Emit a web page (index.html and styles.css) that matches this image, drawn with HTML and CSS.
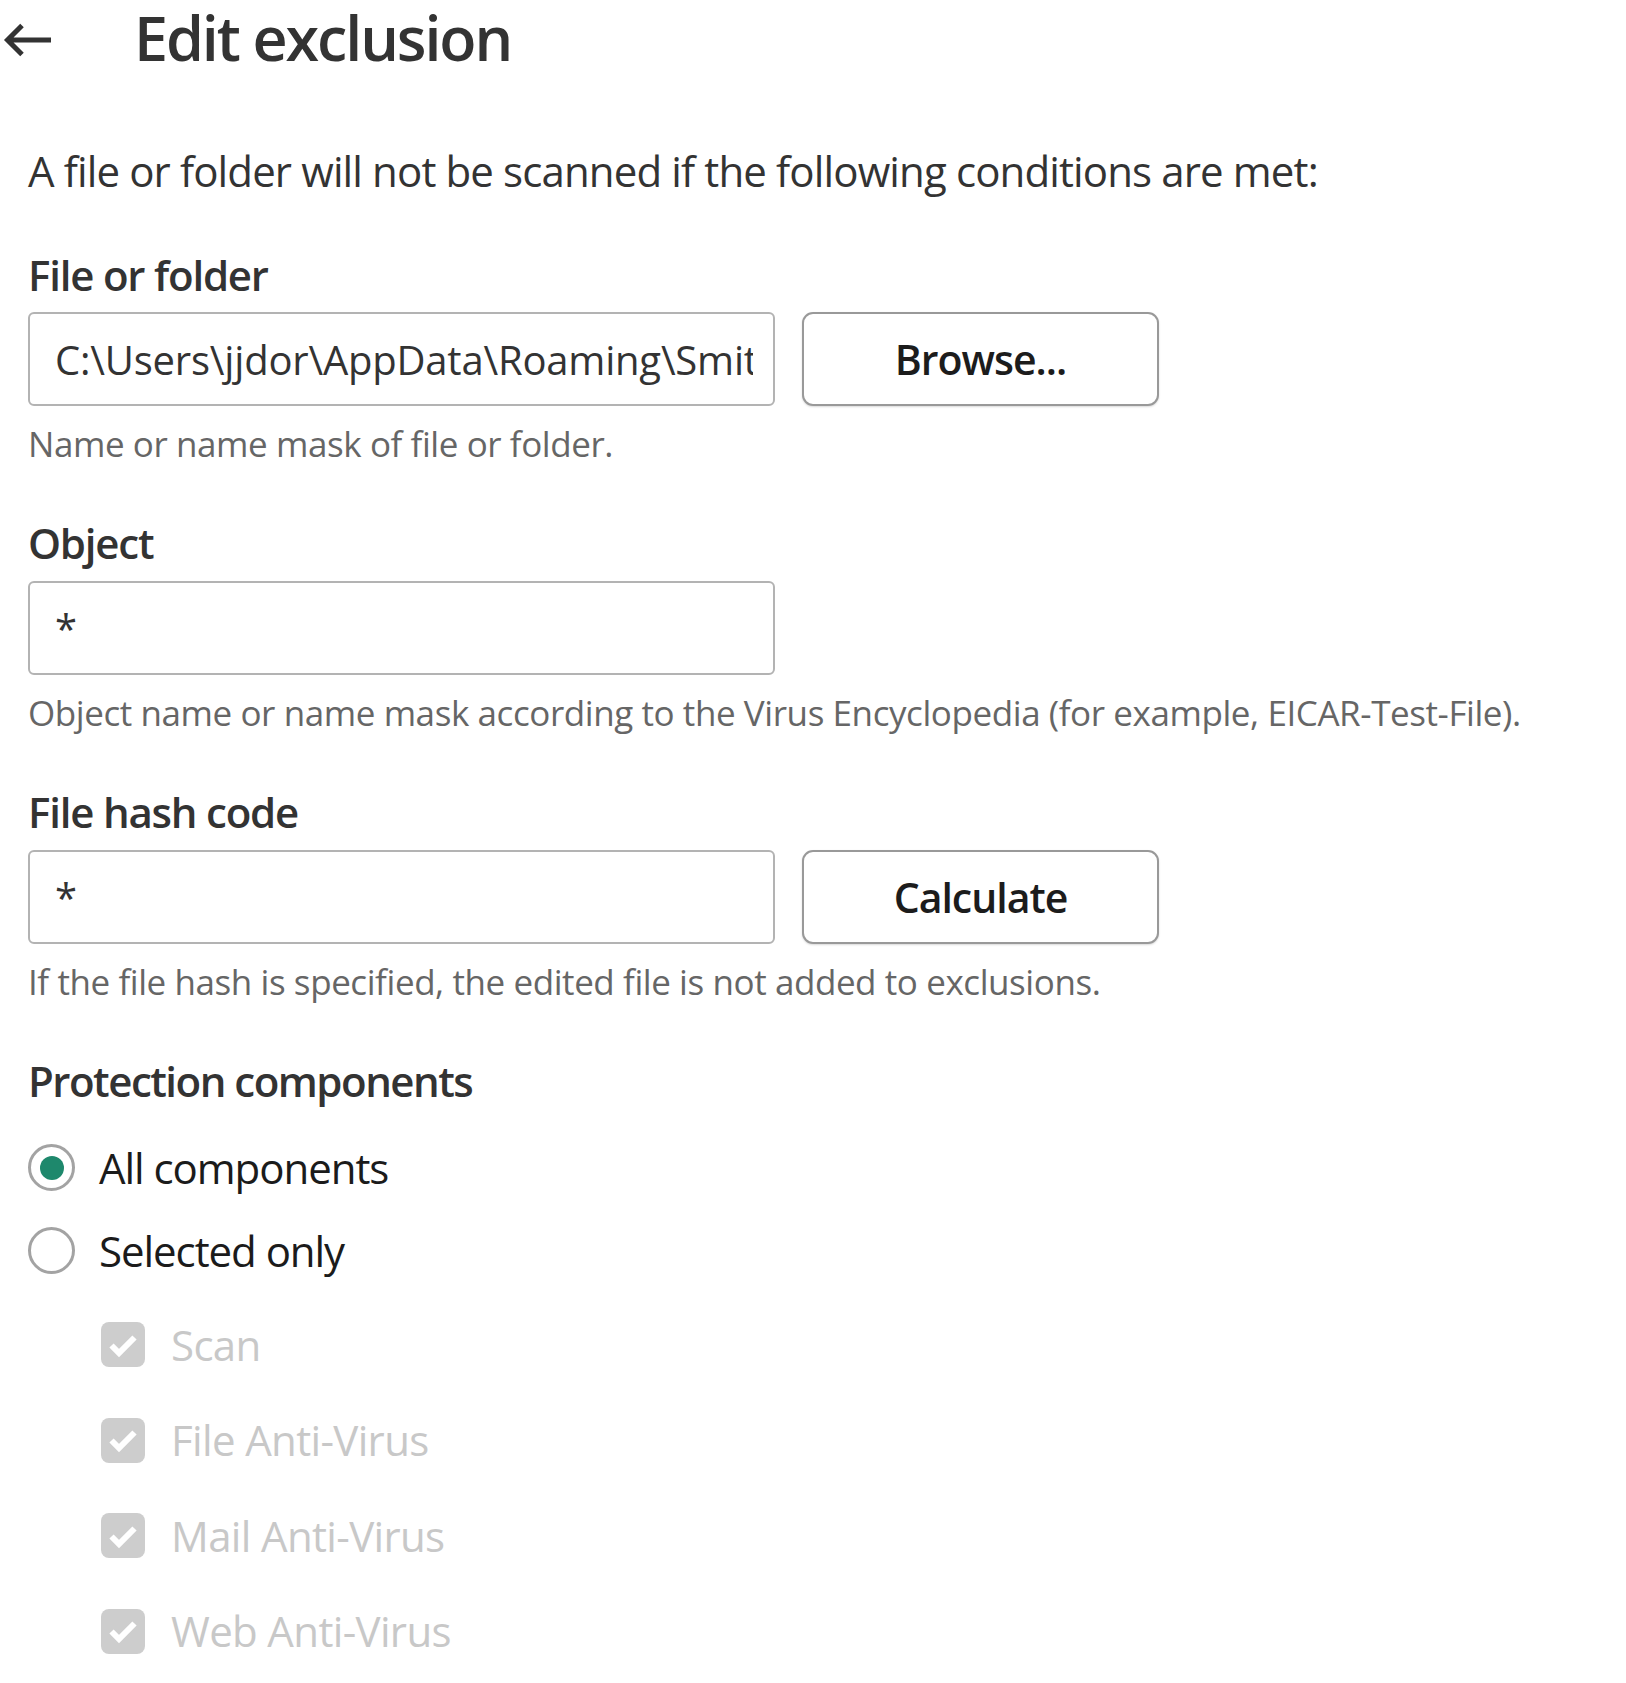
FILE: index.html
```html
<!DOCTYPE html>
<html lang="en">
<head>
<meta charset="utf-8">
<title>Edit exclusion</title>
<link rel="stylesheet" href="styles.css">
</head>
<body>
<div class="page">
  <header class="header">
    <button class="back" type="button" aria-label="Back">
      <svg width="50" height="36" viewBox="0 0 50 36" aria-hidden="true">
        <path d="M49 18 H6 M20 3.5 L5.5 18 L20 32.5" fill="none" stroke="#333333" stroke-width="5" stroke-linecap="butt" stroke-linejoin="miter"/>
      </svg>
    </button>
    <h1 class="title">Edit exclusion</h1>
  </header>

  <main class="content">
    <p class="desc">A file or folder will not be scanned if the following conditions are met:</p>

    <section class="field">
      <h2 class="label">File or folder</h2>
      <div class="input-row">
        <input class="text-input" type="text" value="C:\Users\jjdor\AppData\Roaming\SmitFiddler\Data">
        <button class="btn" type="button">Browse...</button>
      </div>
      <p class="hint">Name or name mask of file or folder.</p>
    </section>

    <section class="field">
      <h2 class="label">Object</h2>
      <div class="input-row">
        <input class="text-input" type="text" value="*">
      </div>
      <p class="hint">Object name or name mask according to the Virus Encyclopedia (for example, EICAR-Test-File).</p>
    </section>

    <section class="field">
      <h2 class="label">File hash code</h2>
      <div class="input-row">
        <input class="text-input" type="text" value="*">
        <button class="btn" type="button">Calculate</button>
      </div>
      <p class="hint">If the file hash is specified, the edited file is not added to exclusions.</p>
    </section>

    <section class="field">
      <h2 class="label label-group">Protection components</h2>
      <div class="radios">
        <label class="radio-row">
          <span class="radio radio-on"><span class="radio-dot"></span></span>
          <span class="radio-text">All components</span>
        </label>
        <label class="radio-row">
          <span class="radio"></span>
          <span class="radio-text">Selected only</span>
        </label>
      </div>
      <div class="checks">
        <div class="check-row">
          <span class="checkbox"><svg width="44" height="44" viewBox="0 0 44 44" aria-hidden="true"><path d="M10.5 22.5 L18 30 L33.5 14.5" fill="none" stroke="#ffffff" stroke-width="6"/></svg></span>
          <span class="check-text">Scan</span>
        </div>
        <div class="check-row">
          <span class="checkbox"><svg width="44" height="44" viewBox="0 0 44 44" aria-hidden="true"><path d="M10.5 22.5 L18 30 L33.5 14.5" fill="none" stroke="#ffffff" stroke-width="6"/></svg></span>
          <span class="check-text">File Anti-Virus</span>
        </div>
        <div class="check-row">
          <span class="checkbox"><svg width="44" height="44" viewBox="0 0 44 44" aria-hidden="true"><path d="M10.5 22.5 L18 30 L33.5 14.5" fill="none" stroke="#ffffff" stroke-width="6"/></svg></span>
          <span class="check-text">Mail Anti-Virus</span>
        </div>
        <div class="check-row">
          <span class="checkbox"><svg width="44" height="44" viewBox="0 0 44 44" aria-hidden="true"><path d="M10.5 22.5 L18 30 L33.5 14.5" fill="none" stroke="#ffffff" stroke-width="6"/></svg></span>
          <span class="check-text">Web Anti-Virus</span>
        </div>
      </div>
    </section>
  </main>
</div>
</body>
</html>
```

FILE: styles.css
```css
* {
  box-sizing: border-box;
}

html, body {
  margin: 0;
  padding: 0;
  background: #ffffff;
}

body {
  font-family: "Open Sans", "Noto Sans", sans-serif;
  color: #333333;
  overflow: hidden;
}

.page {
  width: 1626px;
  padding-top: 2px;
}

.header {
  display: flex;
  align-items: flex-start;
  height: 71px;
  padding-left: 2px;
}

.back {
  margin: 20px 0 0 0;
  padding: 0;
  border: 0;
  background: none;
  width: 50px;
  height: 36px;
  display: block;
}

.back svg {
  display: block;
}

.title {
  margin: 0 0 0 82px;
  font-size: 61px;
  line-height: 71px;
  font-weight: 560;
  color: #333333;
  letter-spacing: -2.1px;
}

.content {
  padding-left: 28px;
}

.desc {
  margin: 70px 0 0 0;
  font-size: 42px;
  line-height: 56px;
  color: #333333;
  letter-spacing: -0.87px;
}

.field {
  margin-top: 47px;
}

.desc + .field {
  margin-top: 48px;
}

.label {
  margin: 0;
  font-size: 42px;
  line-height: 56px;
  font-weight: 600;
  color: #333333;
  letter-spacing: -1.2px;
}

.label-group {
  letter-spacing: -1.5px;
}

.input-row {
  display: flex;
  gap: 27px;
  margin-top: 9px;
}

.field + .field .input-row {
  margin-top: 10px;
}

.text-input {
  width: 747px;
  height: 94px;
  margin: 0;
  padding: 0 20px 0 25px;
  border: 2px solid #b3b3b3;
  border-radius: 6px;
  background: #ffffff;
  font-family: "Open Sans", "Noto Sans", sans-serif;
  font-size: 40px;
  color: #333333;
  letter-spacing: -0.2px;
  outline: none;
}

.btn {
  width: 357px;
  height: 94px;
  margin: 0;
  padding: 0;
  border: 2px solid #999999;
  border-radius: 11px;
  background: #ffffff;
  box-shadow: 0 1px 2px rgba(0, 0, 0, 0.15);
  font-family: "Open Sans", "Noto Sans", sans-serif;
  font-size: 41px;
  font-weight: 600;
  color: #1c1c1c;
  letter-spacing: -1px;
}

.hint {
  margin: 14px 0 0 0;
  font-size: 35px;
  line-height: 48px;
  color: #666666;
  letter-spacing: -0.42px;
}

.radios {
  margin-top: 17px;
}

.radio-row {
  display: flex;
  align-items: center;
  height: 83px;
}

.radio {
  width: 47px;
  height: 47px;
  border: 3px solid #a3a3a3;
  border-radius: 50%;
  display: flex;
  align-items: center;
  justify-content: center;
  flex: none;
}

.radio-dot {
  width: 24px;
  height: 24px;
  border-radius: 50%;
  background: #1e886c;
}

.radio-text {
  margin-left: 24px;
  font-size: 42px;
  line-height: 56px;
  color: #1b1b1b;
  letter-spacing: -1.05px;
}

.checks {
  margin-top: 5px;
  padding-left: 73px;
}

.check-row {
  display: flex;
  align-items: center;
  height: 95.5px;
}

.checkbox {
  width: 44px;
  height: 45px;
  border-radius: 8px;
  background: #cdcdcd;
  flex: none;
  display: flex;
  align-items: center;
  justify-content: center;
}

.checkbox svg {
  display: block;
}

.check-text {
  margin-left: 26px;
  font-size: 42px;
  line-height: 56px;
  color: #c8c8c8;
  letter-spacing: -0.65px;
}
```
